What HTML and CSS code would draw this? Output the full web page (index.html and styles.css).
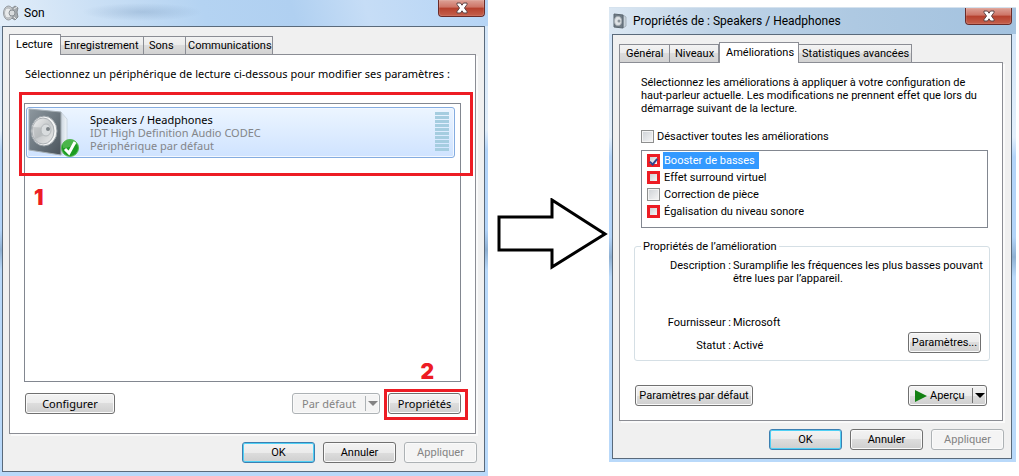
FILE: index.html
```html
<!DOCTYPE html>
<html lang="fr">
<head>
  <meta charset="UTF-8">
  <title>Son - Propriétés de : Speakers / Headphones</title>
  <link rel="stylesheet" href="styles.css">
</head>
<body>
  <main class="guide">
    <section class="window window-sound">
      <header class="titlebar">
        <svg class="title-icon" viewBox="0 0 16 16" aria-hidden="true">
          <path d="M8 4l4-3 3 2-1 4 1 5-3 3-5-3z" fill="#a4a9ad" stroke="#868c91"/>
          <ellipse cx="5.500" cy="8" rx="5" ry="7" fill="#c4c8cb" stroke="#979ca1"/>
          <ellipse cx="5" cy="8" rx="3.500" ry="5" fill="#e8eaeb" stroke="#b3b7ba"/>
          <circle cx="9" cy="8" r="3" fill="#d9dcde" stroke="#8a9095"/>
          <path d="M11 4l3-2M11 12l2 2" stroke="#e9ebec"/>
        </svg>
        <h1>Son</h1>
        <button class="close" aria-label="Fermer">
          <svg viewBox="0 0 14 12"><path d="M2 1h3.500L7 3.200 8.500 1H12v1.500L9.500 6 12 9.500V11H8.500L7 8.800 5.500 11H2V9.500L4.500 6 2 2.500z" fill="#fff" stroke="#5d4446"/></svg>
        </button>
      </header>
      <div class="client">
        <nav class="tabs">
          <button class="tab tab-lecture active">Lecture</button>
          <button class="tab tab-enreg">Enregistrement</button>
          <button class="tab tab-sons">Sons</button>
          <button class="tab tab-comm">Communications</button>
        </nav>
        <div class="panel">
          <p class="intro">Sélectionnez un périphérique de lecture ci-dessous pour modifier ses paramètres :</p>
          <div class="devices">
            <div class="device">
              <svg class="speaker" viewBox="0 0 52 50" aria-hidden="true">
                <defs>
                  <linearGradient id="box" x1="0" y1="0" x2="1" y2="1">
                    <stop offset="0" stop-color="#8e989f"/>
                    <stop offset=".5" stop-color="#6d7880"/>
                    <stop offset="1" stop-color="#4a535b"/>
                  </linearGradient>
                  <linearGradient id="cone" x1="0" y1="0" x2="1" y2="1">
                    <stop offset="0" stop-color="#f4f4f4"/>
                    <stop offset=".5" stop-color="#c6c9cb"/>
                    <stop offset="1" stop-color="#eceded"/>
                  </linearGradient>
                  <linearGradient id="side">
                    <stop offset="0" stop-color="#ccd6df"/>
                    <stop offset="1" stop-color="#f1f6fb"/>
                  </linearGradient>
                </defs>
                <path d="M33 4l6 7v30l-6 6z" fill="url(#side)" stroke="#cbd6e0"/>
                <path d="M1 1l32 3v43L1 42z" fill="url(#box)" stroke="#a7b0b6"/>
                <ellipse cx="16" cy="23" rx="13" ry="15" fill="#f4f5f5" stroke="#959da3"/>
                <ellipse cx="15" cy="23" rx="11" ry="13" fill="url(#cone)" stroke="#aaafb3"/>
                <path d="M5 19l14 1v6L7 31z" fill="#a9adb0" opacity=".5"/>
                <ellipse cx="18" cy="22" rx="5" ry="6" fill="#d9dcde" stroke="#b5b9bc"/>
                <circle cx="20" cy="21" r="2" fill="#7c8287"/>
                <circle cx="42" cy="40" r="8.500" fill="#1c9c22" stroke="#55b853"/>
                <path d="M35 36a8 8 0 0 1 14 0c-4 2-9 4-14 4z" fill="#69c765" opacity=".6"/>
                <path d="M37 41l4 4 6-11" fill="none" stroke="#fff" stroke-width="3"/>
              </svg>
              <div class="device-text">
                <strong>Speakers / Headphones</strong>
                <span>IDT High Definition Audio CODEC</span>
                <span>Périphérique par défaut</span>
              </div>
              <div class="meter"></div>
            </div>
            <div class="mark mark-device"></div>
            <b class="step step-one">1</b>
            <b class="step step-two">2</b>
          </div>
          <div class="actions">
            <button class="btn btn-config">Configurer</button>
            <div class="split disabled">
              <button disabled>Par défaut</button>
              <button class="drop" aria-label="Choisir" disabled></button>
            </div>
            <div class="marked">
              <button class="btn">Propriétés</button>
              <div class="mark mark-button"></div>
            </div>
          </div>
        </div>
        <footer class="footer">
          <button class="btn default">OK</button>
          <button class="btn">Annuler</button>
          <button class="btn" disabled>Appliquer</button>
        </footer>
      </div>
    </section>

    <svg class="arrow" viewBox="0 0 121 72" role="img" aria-label="Étape suivante">
      <path d="M11 19h53V2l53 34-53 33V52H11z" fill="#fff" stroke="#000" stroke-width="3"/>
    </svg>

    <section class="window window-props">
      <header class="titlebar">
        <svg class="title-icon" viewBox="0 0 16 16" aria-hidden="true">
          <path d="M11 2l3 2v9l-3 2z" fill="#c8d2da" stroke="#a5b1bb"/>
          <path d="M2 1l9 1v13l-9-1z" fill="#717d87" stroke="#5b6770"/>
          <ellipse cx="6" cy="8" rx="3.500" ry="4.500" fill="#dfe3e6" stroke="#a7afb5"/>
          <circle cx="7" cy="8" r="1.500" fill="#8b949b"/>
        </svg>
        <h1>Propriétés de : Speakers / Headphones</h1>
        <button class="close" aria-label="Fermer">
          <svg viewBox="0 0 14 12"><path d="M2 1h3.500L7 3.200 8.500 1H12v1.500L9.500 6 12 9.500V11H8.500L7 8.800 5.500 11H2V9.500L4.500 6 2 2.500z" fill="#fff" stroke="#5d4446"/></svg>
        </button>
      </header>
      <div class="client">
        <nav class="tabs">
          <button class="tab tab-general">Général</button>
          <button class="tab tab-niveaux">Niveaux</button>
          <button class="tab tab-amelio active">Améliorations</button>
          <button class="tab tab-stats">Statistiques avancées</button>
        </nav>
        <div class="panel">
          <p class="intro">Sélectionnez les améliorations à appliquer à votre configuration de haut-parleur actuelle. Les modifications ne prennent effet que lors du démarrage suivant de la lecture.</p>
          <label class="check check-all"><input type="checkbox"><span>Désactiver toutes les améliorations</span></label>
          <div class="effects">
            <label class="check selected"><input class="ringed" type="checkbox" checked><span>Booster de basses</span></label>
            <label class="check"><input class="ringed" type="checkbox"><span>Effet surround virtuel</span></label>
            <label class="check"><input type="checkbox"><span>Correction de pièce</span></label>
            <label class="check"><input class="ringed" type="checkbox"><span>Égalisation du niveau sonore</span></label>
          </div>
          <fieldset class="group">
            <legend>Propriétés de l’amélioration</legend>
            <div class="details">
              <span class="key">Description :</span>
              <span class="wide">Suramplifie les fréquences les plus basses pouvant être lues par l’appareil.</span>
              <span class="key">Fournisseur :</span>
              <span>Microsoft</span>
              <span class="key">Statut :</span>
              <span>Activé</span>
              <button class="btn">Paramètres...</button>
            </div>
          </fieldset>
          <div class="actions">
            <button class="btn btn-reset">Paramètres par défaut</button>
            <div class="split">
              <button><svg class="play" viewBox="0 0 12 12" aria-hidden="true"><path d="M0 0l12 6-12 6z" fill="#128012"/></svg>Aperçu</button>
              <button class="drop" aria-label="Choisir"></button>
            </div>
          </div>
        </div>
        <footer class="footer">
          <button class="btn default">OK</button>
          <button class="btn">Annuler</button>
          <button class="btn" disabled>Appliquer</button>
        </footer>
      </div>
    </section>
  </main>
</body>
</html>
```
FILE: styles.css
```css
* { box-sizing: border-box; }
body {
  margin: 0;
  background: #fff;
  color: #000;
  font: 11px/13px Roboto, "Noto Sans", sans-serif;
}
h1, p, fieldset { margin: 0; }
button { font: inherit; color: inherit; margin: 0; white-space: nowrap; }

.guide {
  display: grid;
  grid-template-columns: 488fr 121fr 407fr;
  align-items: start;
  padding-right: 3px;
}
.arrow { align-self: center; width: 100%; margin-top: -8px; }

/* windows */
.window {
  min-width: 0;
  background: linear-gradient(#cfe3f8 0, #e3effb 130px, #b3d4f9 150px, #b3d4f9 230px, #8fb0d2 250px, #b9d9fa 270px, #b9d9fa 100%);
}
.window-sound { padding: 0 3px 4px 2px; }
.window-props { margin-top: 7px; padding: 0 4px 3px 3px; }
.titlebar {
  display: flex;
  align-items: center;
  gap: 5px;
  height: 26px;
  margin: 0 -3px 0 -2px;
  padding-left: 3px;
  background:
    radial-gradient(60px 9px at 142px 12px, rgba(90, 125, 165, .25), transparent),
    linear-gradient(75deg, #e3eef9 0, #cbe0f5 20%, #b4d3f2 42%, #b0d0f1 60%, #c6ddf6 75%, #b5d4f5 100%);
}
.window-props .titlebar {
  height: 27px;
  margin: 0 -4px 0 -3px;
  border-top: 1px solid #d5e2ee;
  background: linear-gradient(80deg, #dce8f3 0, #c0d4e7 25%, #aec9e2 60%, #a3c2df 100%);
}
.titlebar h1 { flex: 1; font: 12px/16px Roboto, "Noto Sans", sans-serif; }
.title-icon { width: 16px; height: 16px; }
.close {
  align-self: flex-start;
  width: 47px;
  height: 17px;
  margin-right: 4px;
  padding: 0;
  border: 1px solid #6b2b28;
  border-top: 0;
  border-radius: 0 0 4px 4px;
  background: linear-gradient(#dda196, #cd7466 45%, #b5402d 50%, #c5604c);
  box-shadow: inset 0 0 1px #fff;
}
.close svg { display: block; width: 14px; height: 12px; margin: 0 auto; }
.window-sound .close { margin-right: 3px; }
.client {
  padding: 7px 7px 8px 6px;
  border: 1px solid #5a6a7b;
  background: #f0f0f0;
}

/* tabs */
.tabs { display: flex; align-items: flex-end; height: 20px; }
.tab {
  height: 18px;
  padding: 0 3px;
  border: 1px solid #8b8d94;
  border-bottom: 0;
  border-left-width: 0;
  background: linear-gradient(#f3f3f3, #ebebeb 50%, #dcdcdc 50%, #d2d2d2);
  text-align: left;
}
.tab:first-child { border-left-width: 1px; }
.tab.active {
  position: relative;
  height: 21px;
  margin-bottom: -1px;
  padding: 0 6px 2px;
  border-left-width: 1px;
  background: #fff;
}
.tab-lecture { width: 52px; }
.tab-enreg { width: 83px; }
.tab-sons { width: 42px; padding-left: 5px; }
.tab-comm { width: 87px; padding: 0 1px 0 2px; }
.tab-general { width: 51px; padding-left: 6px; }
.tab-niveaux { width: 49px; padding-left: 5px; }
.tab-amelio { width: 80px; }
.tab-stats { width: 113px; }

.panel {
  margin-right: 1px;
  border: 1px solid #8b8d94;
  background: #fff;
  box-shadow: 2px 2px 0 #fafafa;
}
.window-sound .panel { padding: 11px 14px 19px; font: 11px/13px "Noto Sans", sans-serif; }
.window-props .panel { padding: 13px 12px 14px 14px; }
.window-sound .intro { padding-left: 1px; line-height: 16px; white-space: nowrap; }
.window-props .intro { padding: 0 0 0 7px; }

/* device list */
.devices {
  position: relative;
  min-height: 279px;
  margin-top: 21px;
  padding: 3px 5px 0 1px;
  border: 1px solid #828790;
}
.device {
  display: flex;
  align-items: flex-start;
  height: 51px;
  padding-right: 5px;
  border: 1px solid #84ace0;
  border-radius: 3px;
  background: linear-gradient(#ecf5ff, #cfe3ff);
  box-shadow: inset 0 0 0 1px #f3f8ff;
}
.speaker { width: 52px; height: 50px; margin-left: 1px; }
.device-text { display: grid; flex: 1; padding: 5px 0 0 10px; color: #838589; }
.device-text strong { color: #000; font-weight: normal; }
.meter {
  width: 14px;
  height: 39px;
  margin-top: 4px;
  background: repeating-linear-gradient(#a5cde0 0, #a5cde0 3px, transparent 3px, transparent 4px);
}

/* red annotations */
.mark { position: absolute; border: 3px solid #ed1c24; pointer-events: none; }
.mark-device { top: -12px; right: -13px; left: -6px; height: 84px; }
.marked { position: relative; }
.mark-button { inset: -4px -7px -6px -4px; }
.step { position: absolute; color: #ed1c24; font: 900 21px/20px Inter, sans-serif; }
.step-one { top: 84px; left: 9px; }
.step-two { right: 26px; bottom: -1px; }

/* buttons */
.btn, .split {
  min-width: 73px;
  height: 21px;
  border: 1px solid #707070;
  border-radius: 3px;
  background: linear-gradient(#f3f3f3, #ebebeb 50%, #dddddd 50%, #cfcfcf);
  box-shadow: inset 0 0 0 1px #fafafa;
}
.btn { padding: 0 2px; }
.btn.default { border-color: #3c7fb1; box-shadow: inset 0 0 0 1px #4fd0f5; }
.btn:disabled, .split.disabled { border-color: #adb2b5; background: #f4f4f4; color: #838383; }
.split { display: flex; align-items: center; width: 79px; padding-left: 6px; }
.split button { display: flex; align-items: center; flex: 1; gap: 3px; padding: 0; border: 0; background: none; }
.split .drop { flex: none; justify-content: center; width: 14px; height: 15px; border-left: 1px solid #707070; }
.drop::before { content: ""; border: 5px solid transparent; border-top-color: currentColor; border-bottom: 0; }
.split.disabled { width: 88px; margin-left: auto; padding-left: 9px; }
.split.disabled .drop { border-color: #adb2b5; }
.play { width: 12px; height: 12px; }
.actions { display: flex; gap: 8px; margin-top: 11px; }
.window-sound .actions { padding-left: 1px; }
.window-props .actions { justify-content: space-between; margin-top: 24px; padding: 0 3px 0 1px; }
.btn-config { width: 90px; }
.btn-reset { width: 118px; }
.footer { display: flex; justify-content: flex-end; gap: 8px; margin-top: 8px; }

/* enhancements */
.check { display: flex; align-items: center; gap: 3px; height: 17px; }
.check input {
  display: grid;
  place-items: center;
  appearance: none;
  width: 13px;
  height: 13px;
  margin: 0;
  border: 1px solid #8e8f8f;
  background: linear-gradient(135deg, #cdd1d5, #f6f6f6);
  box-shadow: inset 0 0 0 1px #f4f4f4;
}
.check input:checked::before {
  content: "";
  width: 3px;
  height: 6px;
  border: solid #34438a;
  border-width: 0 2px 2px 0;
  transform: rotate(40deg);
}
.check input.ringed { border: 3px solid #ed1c24; box-shadow: none; }
.check-all { margin: 13px 0 0 7px; }
.effects {
  height: 78px;
  margin: 5px 2px 0 7px;
  padding: 1px 5px;
  border: 1px solid #828790;
}
.effects .check span { padding: 2px 4px 2px 1px; }
.selected span { background: #3399ff; color: #fff; }
.group {
  min-width: 0;
  margin-top: 12px;
  padding: 6px 5px 7px 6px;
  border: 1px solid #d5dfe5;
  border-radius: 3px;
}
.group legend { padding: 0 2px; }
.details { display: grid; grid-template-columns: 90px 1fr auto; column-gap: 2px; grid-template-rows: 57px 23px 14px; }
.details .key { grid-column: 1; text-align: right; }
.details .wide { grid-column: 2 / 4; }
.details .btn { grid-column: 3; grid-row: 2 / 4; align-self: end; margin-right: 3px; }
```
